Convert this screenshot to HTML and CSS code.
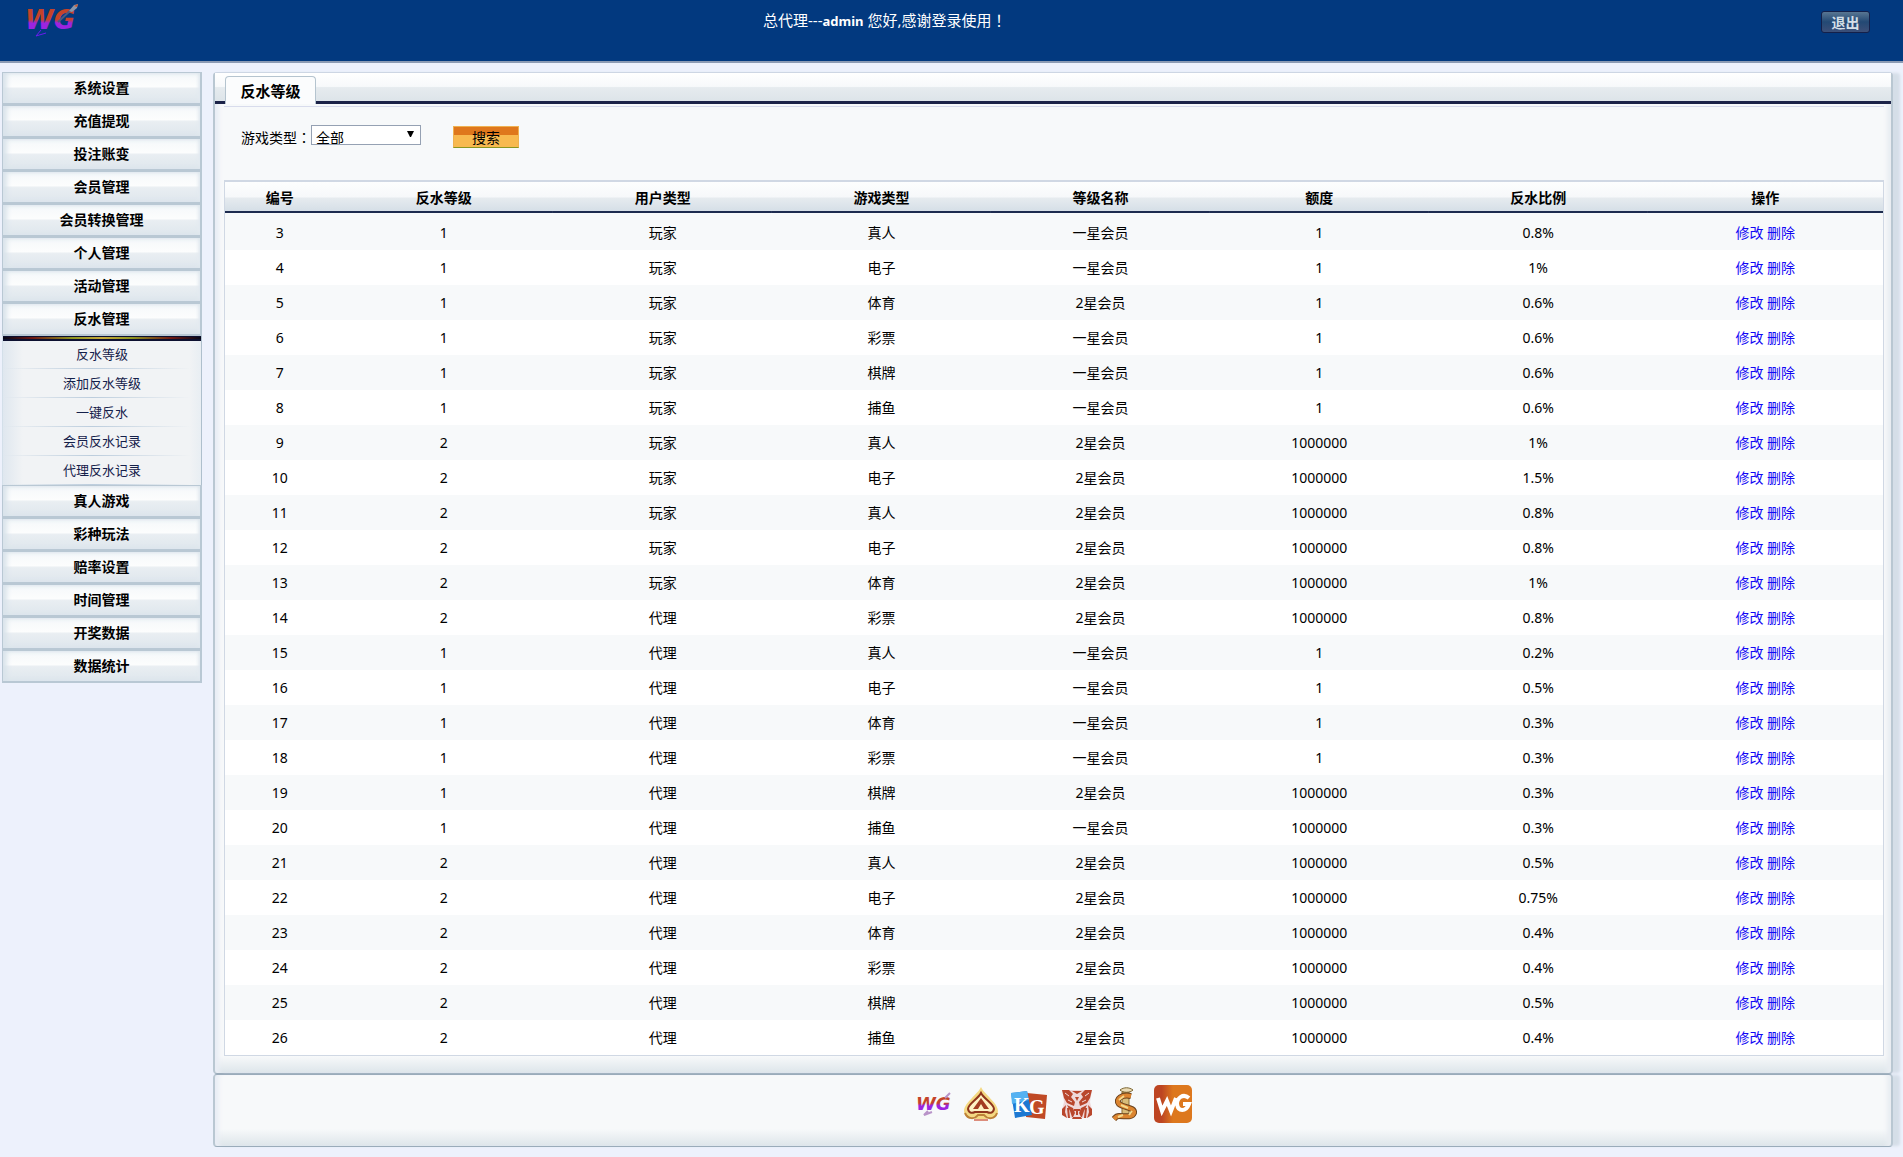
FILE: index.html
```html
<!DOCTYPE html>
<html lang="zh-CN">
<head>
<meta charset="utf-8">
<title>反水等级</title>
<link rel="stylesheet" href="styles.css">
</head>
<body>
<header class="topbar">
  <svg class="logo" width="56" height="32" viewBox="0 0 56 32" role="img" aria-label="WG">
    <defs>
      <linearGradient id="wg" x1="0" y1="0" x2="0" y2="1">
        <stop offset="0.48" stop-color="#c4432a"/><stop offset="0.6" stop-color="#9b24e0"/>
      </linearGradient>
    </defs>
    <text x="0" y="25" class="logo-text" fill="url(#wg)">WG</text>
    <path d="M33 18L47 5" stroke="#4a5a80" stroke-width="2"/>
    <path d="M44 7L49 1L53 0L52 4L47 8Z" fill="#8a97ab"/><path d="M49 2L53 0L52 3Z" fill="#d0562a"/>
    <path d="M16 26L11 32L21 29" fill="none" stroke="#6a1cf0"/>
  </svg>
  <p class="greeting">总代理---<strong>admin</strong> 您好,感谢登录使用<span class="punct" lang="zh-TW">！</span></p>
  <button class="logout" type="button">退出</button>
</header>
<div class="layout">
  <nav class="sidebar">
    <a class="menu" href="#">系统设置</a>
    <a class="menu" href="#">充值提现</a>
    <a class="menu" href="#">投注账变</a>
    <a class="menu" href="#">会员管理</a>
    <a class="menu" href="#">会员转换管理</a>
    <a class="menu" href="#">个人管理</a>
    <a class="menu" href="#">活动管理</a>
    <a class="menu" href="#">反水管理</a>
    <div class="submenu">
      <a href="#">反水等级</a>
      <a href="#">添加反水等级</a>
      <a href="#">一键反水</a>
      <a href="#">会员反水记录</a>
      <a href="#">代理反水记录</a>
    </div>
    <a class="menu" href="#">真人游戏</a>
    <a class="menu" href="#">彩种玩法</a>
    <a class="menu" href="#">赔率设置</a>
    <a class="menu" href="#">时间管理</a>
    <a class="menu" href="#">开奖数据</a>
    <a class="menu" href="#">数据统计</a>
  </nav>
  <main class="main">
    <section class="panel">
      <div class="tabs"><h1 class="tab">反水等级</h1></div>
      <div class="content">
        <form class="search">
          <label for="type">游戏类型<span class="punct" lang="zh-TW">：</span></label>
          <span class="picker">
            <select id="type"><option>全部</option></select>
            <svg class="arrow" width="7" height="6" viewBox="0 0 7 6" aria-hidden="true"><path d="M0 0H7L4 6H3Z"/></svg>
          </span>
          <button class="go" type="button">搜索</button>
        </form>
        <table class="grid">
          <colgroup><col class="c-id"><col><col><col><col><col><col><col class="c-act"></colgroup>
          <thead>
            <tr><th>编号</th><th>反水等级</th><th>用户类型</th><th>游戏类型</th><th>等级名称</th><th>额度</th><th>反水比例</th><th>操作</th></tr>
          </thead>
          <tbody>
            <tr><td>3</td><td>1</td><td>玩家</td><td>真人</td><td>一星会员</td><td>1</td><td>0.8%</td><td><a href="#">修改</a> <a href="#">删除</a></td></tr>
            <tr><td>4</td><td>1</td><td>玩家</td><td>电子</td><td>一星会员</td><td>1</td><td>1%</td><td><a href="#">修改</a> <a href="#">删除</a></td></tr>
            <tr><td>5</td><td>1</td><td>玩家</td><td>体育</td><td>2星会员</td><td>1</td><td>0.6%</td><td><a href="#">修改</a> <a href="#">删除</a></td></tr>
            <tr><td>6</td><td>1</td><td>玩家</td><td>彩票</td><td>一星会员</td><td>1</td><td>0.6%</td><td><a href="#">修改</a> <a href="#">删除</a></td></tr>
            <tr><td>7</td><td>1</td><td>玩家</td><td>棋牌</td><td>一星会员</td><td>1</td><td>0.6%</td><td><a href="#">修改</a> <a href="#">删除</a></td></tr>
            <tr><td>8</td><td>1</td><td>玩家</td><td>捕鱼</td><td>一星会员</td><td>1</td><td>0.6%</td><td><a href="#">修改</a> <a href="#">删除</a></td></tr>
            <tr><td>9</td><td>2</td><td>玩家</td><td>真人</td><td>2星会员</td><td>1000000</td><td>1%</td><td><a href="#">修改</a> <a href="#">删除</a></td></tr>
            <tr><td>10</td><td>2</td><td>玩家</td><td>电子</td><td>2星会员</td><td>1000000</td><td>1.5%</td><td><a href="#">修改</a> <a href="#">删除</a></td></tr>
            <tr><td>11</td><td>2</td><td>玩家</td><td>真人</td><td>2星会员</td><td>1000000</td><td>0.8%</td><td><a href="#">修改</a> <a href="#">删除</a></td></tr>
            <tr><td>12</td><td>2</td><td>玩家</td><td>电子</td><td>2星会员</td><td>1000000</td><td>0.8%</td><td><a href="#">修改</a> <a href="#">删除</a></td></tr>
            <tr><td>13</td><td>2</td><td>玩家</td><td>体育</td><td>2星会员</td><td>1000000</td><td>1%</td><td><a href="#">修改</a> <a href="#">删除</a></td></tr>
            <tr><td>14</td><td>2</td><td>代理</td><td>彩票</td><td>2星会员</td><td>1000000</td><td>0.8%</td><td><a href="#">修改</a> <a href="#">删除</a></td></tr>
            <tr><td>15</td><td>1</td><td>代理</td><td>真人</td><td>一星会员</td><td>1</td><td>0.2%</td><td><a href="#">修改</a> <a href="#">删除</a></td></tr>
            <tr><td>16</td><td>1</td><td>代理</td><td>电子</td><td>一星会员</td><td>1</td><td>0.5%</td><td><a href="#">修改</a> <a href="#">删除</a></td></tr>
            <tr><td>17</td><td>1</td><td>代理</td><td>体育</td><td>一星会员</td><td>1</td><td>0.3%</td><td><a href="#">修改</a> <a href="#">删除</a></td></tr>
            <tr><td>18</td><td>1</td><td>代理</td><td>彩票</td><td>一星会员</td><td>1</td><td>0.3%</td><td><a href="#">修改</a> <a href="#">删除</a></td></tr>
            <tr><td>19</td><td>1</td><td>代理</td><td>棋牌</td><td>2星会员</td><td>1000000</td><td>0.3%</td><td><a href="#">修改</a> <a href="#">删除</a></td></tr>
            <tr><td>20</td><td>1</td><td>代理</td><td>捕鱼</td><td>一星会员</td><td>1000000</td><td>0.3%</td><td><a href="#">修改</a> <a href="#">删除</a></td></tr>
            <tr><td>21</td><td>2</td><td>代理</td><td>真人</td><td>2星会员</td><td>1000000</td><td>0.5%</td><td><a href="#">修改</a> <a href="#">删除</a></td></tr>
            <tr><td>22</td><td>2</td><td>代理</td><td>电子</td><td>2星会员</td><td>1000000</td><td>0.75%</td><td><a href="#">修改</a> <a href="#">删除</a></td></tr>
            <tr><td>23</td><td>2</td><td>代理</td><td>体育</td><td>2星会员</td><td>1000000</td><td>0.4%</td><td><a href="#">修改</a> <a href="#">删除</a></td></tr>
            <tr><td>24</td><td>2</td><td>代理</td><td>彩票</td><td>2星会员</td><td>1000000</td><td>0.4%</td><td><a href="#">修改</a> <a href="#">删除</a></td></tr>
            <tr><td>25</td><td>2</td><td>代理</td><td>棋牌</td><td>2星会员</td><td>1000000</td><td>0.5%</td><td><a href="#">修改</a> <a href="#">删除</a></td></tr>
            <tr><td>26</td><td>2</td><td>代理</td><td>捕鱼</td><td>2星会员</td><td>1000000</td><td>0.4%</td><td><a href="#">修改</a> <a href="#">删除</a></td></tr>
          </tbody>
        </table>
      </div>
    </section>
    <footer class="brands">
      <svg width="38" height="38" viewBox="0 0 38 38" role="img" aria-label="WG">
        <text x="2" y="25" class="brand-wg" fill="url(#wg)">WG</text>
        <path d="M31 13L36 8M14 26L10 30L18 27" fill="none" stroke="#b893c8" stroke-width="2"/>
      </svg>
      <svg width="38" height="38" viewBox="0 0 38 38" role="img" aria-label="A">
        <path d="M19 2C22 9 36 18 36 26C36 34 26 35 22 30L25 34H13L16 30C12 35 2 34 2 26C2 18 16 9 19 2Z" fill="#f4d983"/>
        <path d="M3 28C6 35 13 34 16 30H22C26 35 33 34 35 28" fill="none" stroke="#bd8137" stroke-width="2"/>
        <path d="M12 35H26" stroke="#dc8d7c" stroke-width="2"/>
        <path d="M19 8C22 14 32 19 32 24C31 29 27 28 25 27H13C11 28 7 29 6 24C6 19 16 14 19 8Z" fill="#fff3c4" stroke="#8f351c" stroke-width="2"/>
        <path d="M11 24L19 13L27 24H22L19 19L16 24Z" fill="#a43d22"/>
      </svg>
      <svg width="38" height="38" viewBox="0 0 38 38" role="img" aria-label="KG">
        <path d="M17 8L37 10L35 34L16 32Z" fill="#c04a25"/>
        <path d="M1 8L17 6L22 30L5 33Z" fill="#1c78d2"/><path d="M1 8L17 6L19 15L2 19Z" fill="#55b2f2"/>
        <text x="4" y="27" class="brand-kg">K</text><text x="19" y="29" class="brand-kg">G</text>
      </svg>
      <svg width="38" height="38" viewBox="0 0 38 38" role="img" aria-label="tiger">
        <path d="M4 5H34L32 17L34 25L30 33H8L4 25L6 17Z" fill="#efd9da"/>
        <path d="M4 5L11 5L15 9L13 12L17 17L16 21L9 18L6 13ZM34 5L27 5L23 9L25 12L21 17L22 21L29 18L32 13Z" fill="#b9472d"/>
        <path d="M14 6H24L19 9ZM17 12H21L19 16ZM9 20L15 23L17 28L14 34H24L21 28L23 23L29 20L26 26L24 32H14L12 26Z" fill="#b9472d"/>
        <path d="M8 20L4 24V30L9 33L7 27ZM30 20L34 24V30L29 33L31 27Z" fill="#b9472d"/>
        <path d="M10 23L11 33M28 23L27 33M16 25H22M19 25V30" stroke="#b9472d" stroke-width="2"/>
        <path d="M7 8L11 11M31 8L27 11M10 15L14 17M28 15L24 17" stroke="#f3dcd9"/>
      </svg>
      <svg width="38" height="38" viewBox="0 0 38 38" role="img" aria-label="snake">
        <path d="M16 7H23V32H16Z" fill="#d8bc7a" stroke="#8c6a30"/>
        <path d="M14 5C18 2 23 2 27 5C24 8 17 8 14 5Z" fill="#eadbb5" stroke="#7a6430"/>
        <path d="M25 11C16 9 9 14 13 19C18 23 29 22 28 28C26 33 20 31 13 31C10 31 9 33 8 34" fill="none" stroke="#6b431d" stroke-width="6"/>
        <path d="M25 11C16 9 9 14 13 19C18 23 29 22 28 28C26 33 20 31 13 31C10 31 9 33 8 34" fill="none" stroke="#dc8530" stroke-width="4"/>
        <path d="M18 11L13 15M15 20L22 23M26 26L23 30M17 30L12 32" stroke="#f5d98b" stroke-width="2"/>
      </svg>
      <svg width="38" height="38" viewBox="0 0 38 38" role="img" aria-label="WG">
        <defs><linearGradient id="box"><stop offset="0.2" stop-color="#bd4522"/><stop offset="0.5" stop-color="#dd781e"/></linearGradient></defs>
        <rect width="38" height="38" rx="5" fill="url(#box)"/>
        <path d="M4 13L8 26L13 16L17 26L22 13M35 13C29 8 23 13 23 19C24 27 32 27 35 19H29" fill="none" stroke="#fff" stroke-width="4"/>
      </svg>
    </footer>
  </main>
</div>
</body>
</html>
```
FILE: styles.css
```css
* { box-sizing: border-box; }
body {
  margin: 0;
  background: #edf1fc;
  color: #000;
  font: 14px/20px "Noto Sans", "Noto Sans CJK SC", sans-serif;
}
a { text-decoration: none; }
.punct { font-family: "Noto Sans CJK TC", sans-serif; line-height: 1; }

/* top bar */
.topbar {
  display: grid;
  grid-template-columns: 40% 1fr auto;
  align-items: start;
  height: 63px;
  padding: 4px 33px 0 25px;
  background: #02397f;
  border-bottom: 2px solid #8c9bb4;
}
.logo { overflow: visible; }
.logo-text { font: italic bold 26px "DejaVu Sans", sans-serif; }
.greeting {
  margin: 6px 0 0;
  color: #fff;
  font-size: 15px;
}
.greeting strong { font-size: 13px; }
.logout {
  width: 49px;
  height: 22px;
  margin-top: 7px;
  padding: 0;
  border: 1px solid #14204a;
  border-radius: 3px;
  background: linear-gradient(#587692, #234974 50%, #3c4f78);
  color: #d5dfe8;
  font: bold 14px/18px "Noto Sans CJK SC", sans-serif;
}

.layout {
  display: flex;
  align-items: flex-start;
  gap: 11px;
  padding: 9px 10px 9px 2px;
}

/* side menu */
.sidebar { flex: 0 0 200px; }
.menu {
  display: block;
  height: 33px;
  border: 1px solid #b9c8d4;
  border-right-width: 2px;
  border-bottom-width: 2px;
  box-shadow: inset 4px 0 5px #d9e3eb, inset -2px 0 3px #e3eaf0;
  background: linear-gradient(#f5f8fa, #fcfdfd 45%, #e9eef2 52%, #dfe7ed);
  color: #000;
  font-weight: bold;
  line-height: 30px;
  text-align: center;
}
.submenu {
  padding-top: 4px;
  border-right: 1px solid #aebfcd;
  border-left: 1px solid #d3dfe9;
  background:
    linear-gradient(90deg, #050818, #6f1712 15%, #8f961f 35%, #c8a93a 50%, #8f961f 65%, #6f1712 85%, #050818) 0 1px / 100% 2px no-repeat,
    linear-gradient(#0d1030, #0d1030) 0 0 / 100% 5px no-repeat,
    linear-gradient(90deg, #dfe7ef, #f1f3f5 10%, #f1f3f5 94%, #e8eef3);
}
.submenu a {
  display: block;
  height: 29px;
  background: linear-gradient(90deg, transparent, #bccddd 45%, transparent 95%) bottom / 100% 1px no-repeat;
  color: #14204a;
  font-size: 13px;
  line-height: 28px;
  text-align: center;
}

/* main panel */
.main { flex: 1; min-width: 0; }
.panel, .brands {
  border: 1px solid #9aabba;
  border-right: 2px solid #b9c7d2;
  border-left: 2px solid #b9c7d2;
  border-radius: 4px;
  box-shadow: 8px 0 3px -1px #d5dee8, inset 7px 0 4px -3px #e9edf5, inset -7px 0 4px -3px #e9edf2;
  background: linear-gradient(transparent, #dde5ea) bottom / 100% 17px no-repeat, #f7f9fa;
}
.panel { border-top-color: #cdd6e4; }
.tabs {
  display: flex;
  align-items: flex-end;
  height: 31px;
  padding-left: 10px;
  border-bottom: 3px solid #1c2348;
  background: linear-gradient(#fff, #f7f9fb 48%, #e6ebef 52%, #dde4e9);
}
.tab {
  width: 91px;
  height: 28px;
  margin: 0 0 -3px;
  border: 1px solid #b5c4cf;
  border-bottom: 0;
  border-radius: 4px 4px 0 0;
  background: #fbfcfd;
  font-size: 15px;
  line-height: 28px;
  text-align: center;
}
.content {
  margin: 2px 7px 0 9px;
  padding-bottom: 17px;
  border-top: 1px solid #d8dcec;
}
.search {
  display: flex;
  align-items: flex-start;
  height: 73px;
  padding: 18px 0 0 17px;
}
.search label { padding-top: 3px; }
.picker { position: relative; }
.picker select {
  display: block;
  width: 110px;
  height: 20px;
  padding: 2px 4px 0;
  border: 1px solid #95a1b3;
  border-radius: 0;
  background: #fff;
  color: #000;
  font: 14px/18px "Noto Sans CJK SC", sans-serif;
  appearance: none;
}
.arrow { position: absolute; top: 6px; right: 7px; pointer-events: none; }
.go {
  width: 66px;
  height: 22px;
  margin: 1px 0 0 32px;
  padding: 0;
  border: 1px solid #efb150;
  border-bottom-color: #8b9620;
  background: linear-gradient(#df771c 40%, #f8b94f 42%);
  font: 14px/18px "Noto Sans CJK SC", sans-serif;
}

/* data table */
.grid {
  width: 100%;
  table-layout: fixed;
  border-collapse: separate;
  border-spacing: 0;
  border: 1px solid #d0d8e4;
  border-top-width: 2px;
  background: #fff;
  white-space: nowrap;
}
.c-id { width: 6.6%; }
.c-act { width: 14.2%; }
.grid th {
  height: 33px;
  padding: 0;
  border-bottom: 2px solid #f7f9fa;
  background:
    linear-gradient(#1d2b4f, #1d2b4f) bottom / 100% 2px no-repeat,
    linear-gradient(#fdfefe, #f6f8fa 48%, #e6ebef 52%, #d3dde6);
  background-clip: padding-box;
}
.grid td {
  height: 35px;
  padding: 0;
  text-align: center;
}
.grid tbody tr:nth-child(odd) { background: #f7f9fa; }
.grid a { color: #1206f5; }

/* brand strip */
.brands {
  display: flex;
  justify-content: center;
  gap: 10px;
  height: 73px;
  padding-top: 10px;
}
.brand-wg { font: italic bold 18px "DejaVu Sans", sans-serif; }
.brand-kg { font: bold 20px "Liberation Serif", serif; fill: #fff; }
```
